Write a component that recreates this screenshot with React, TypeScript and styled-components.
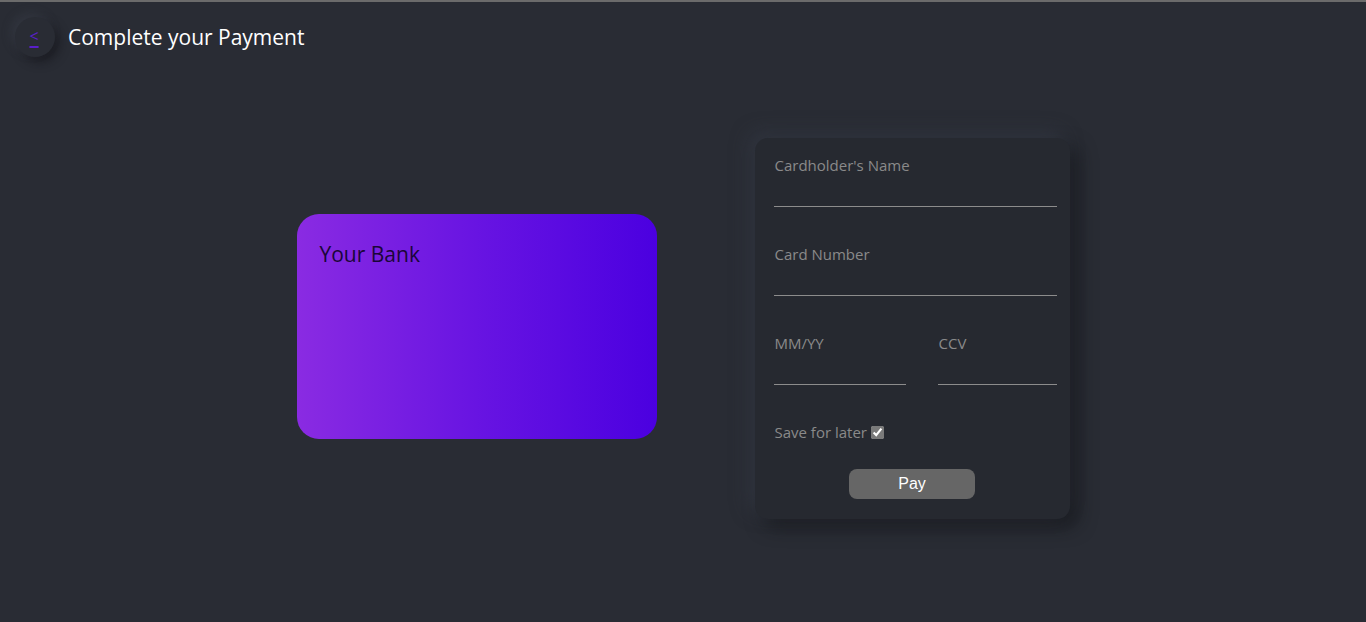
import styled, { createGlobalStyle } from "styled-components";

const GlobalStyle = createGlobalStyle`
  html, body {
    margin: 0;
    padding: 0;
    background: #292c34;
    font-family: "Open Sans", "Noto Sans", sans-serif;
  }
  body {
    border-top: 2px solid #6b6b6b;
    min-height: 620px;
  }
`;

function App() {
  return (
    <>
      <GlobalStyle />
      <Page>
        <Header>
          <BackButton>
            <BackLink href="#">&lt;</BackLink>
          </BackButton>
          <Title>Complete your Payment</Title>
        </Header>
        <Main>
          <BankCard>
            <BankName>Your Bank</BankName>
          </BankCard>
          <FormPanel>
            <Field>
              <Label>Cardholder's Name</Label>
              <Input type="text" />
            </Field>
            <Field>
              <Label>Card Number</Label>
              <Input type="text" />
            </Field>
            <FieldRow>
              <Field width="132px">
                <Label>MM/YY</Label>
                <Input type="text" />
              </Field>
              <Field width="119px">
                <Label>CCV</Label>
                <Input type="text" />
              </Field>
            </FieldRow>
            <SaveRow>
              Save for later
              <Check type="checkbox" defaultChecked />
            </SaveRow>
            <PayButton>Pay</PayButton>
          </FormPanel>
        </Main>
      </Page>
    </>
  );
}

export default App;

const Page = styled.div`
  display: flex;
  flex-direction: column;
`;

const Header = styled.header`
  display: flex;
  align-items: center;
  gap: 13px;
  padding: 15px 15px 0 15px;
`;

const BackButton = styled.div`
  width: 40px;
  height: 40px;
  border-radius: 50%;
  background: #292c34;
  box-shadow: -4px -4px 10px rgba(60, 64, 76, 0.45), 5px 5px 10px rgba(18, 19, 23, 0.55);
  display: flex;
  align-items: center;
  justify-content: center;
`;

const BackLink = styled.a`
  color: #5a1fc9;
  font-size: 16px;
  font-family: "Open Sans", sans-serif;
  text-decoration: underline;
  text-underline-offset: 4px;
  text-decoration-thickness: 2px;
  margin-left: -2px;
  margin-top: -2px;
`;

const Title = styled.h1`
  margin: 0;
  color: #ffffff;
  font-size: 21px;
  font-weight: 400;
`;

const Main = styled.main`
  display: flex;
  justify-content: center;
  align-items: center;
  gap: 98px;
  padding-top: 81px;
`;

const BankCard = styled.div`
  width: 360px;
  height: 225px;
  border-radius: 22px;
  background: linear-gradient(90deg, #8a2be2 0%, #6814e2 50%, #4b00e0 100%);
  padding: 27px 23px;
  box-sizing: border-box;
  margin-bottom: 5px;
`;

const BankName = styled.div`
  color: #1a0638;
  font-size: 21px;
  line-height: 26px;
`;

const FormPanel = styled.form`
  width: 315px;
  box-sizing: border-box;
  padding: 17px 13px 20px 19px;
  border-radius: 13px;
  background: #262930;
  box-shadow: -6px -6px 18px rgba(54, 58, 70, 0.6), 8px 8px 18px rgba(17, 18, 22, 0.6);
  display: flex;
  flex-direction: column;
`;

const Field = styled.div<{ width?: string }>`
  display: flex;
  flex-direction: column;
  width: ${(p) => p.width || "100%"};
  margin-bottom: 37px;
`;

const FieldRow = styled.div`
  display: flex;
  justify-content: space-between;
`;

const Label = styled.label`
  color: #8a8a8a;
  font-size: 15px;
  line-height: 20px;
  padding-left: 1px;
`;

const Input = styled.input`
  height: 32px;
  box-sizing: border-box;
  background: transparent;
  border: none;
  border-bottom: 1px solid #8c8c8c;
  outline: none;
  color: #ddd;
  width: 100%;
`;

const SaveRow = styled.label`
  display: flex;
  align-items: center;
  color: #8a8a8a;
  font-size: 15px;
  line-height: 20px;
  padding-left: 1px;
  margin-top: 0;
`;

const Check = styled.input`
  margin: 0 0 0 4px;
  width: 13px;
  height: 13px;
  accent-color: #7a7a7a;
`;

const PayButton = styled.button`
  align-self: center;
  width: 126px;
  height: 30px;
  margin-top: 27px;
  margin-right: 6px;
  border: none;
  border-radius: 8px;
  background: #666666;
  color: #ffffff;
  font-family: "Liberation Sans", Arial, sans-serif;
  font-size: 16px;
`;
